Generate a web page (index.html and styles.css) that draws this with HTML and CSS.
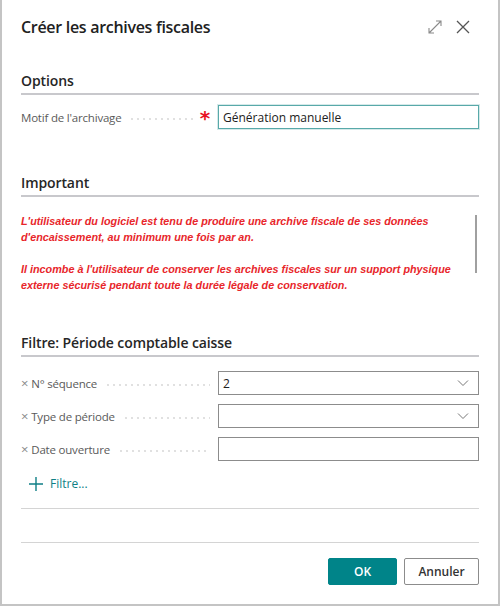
FILE: index.html
```html
<!DOCTYPE html>
<html lang="fr">
<head>
    <meta charset="UTF-8">
    <meta name="viewport" content="width=device-width, initial-scale=1.0">
    <title>Créer les archives fiscales</title>
    <link rel="stylesheet" href="styles.css">
</head>
<body>
    <div class="dialog">
        <div class="dialog-header">
            <h1 class="dialog-title">Créer les archives fiscales</h1>
            <div class="header-actions">
                <svg class="icon-expand" width="16" height="16" viewBox="0 0 16 16" fill="none" stroke="#8a8a8a" stroke-width="1.1">
                    <path d="M2 14L14 2M9 2h5v5M2 9v5h5"></path>
                </svg>
                <svg class="icon-close" width="16" height="16" viewBox="0 0 16 16" fill="none" stroke="#555" stroke-width="1.3">
                    <path d="M2 2L14 14M14 2L2 14"></path>
                </svg>
            </div>
        </div>

        <div class="dialog-body">
            <section class="group">
                <h2 class="group-title">Options</h2>
                <div class="field">
                    <div class="field-label">
                        <span class="label-text">Motif de l'archivage</span>
                        <span class="leader"></span>
                        <span class="required">*</span>
                    </div>
                    <div class="field-input focused">Génération manuelle</div>
                </div>
            </section>

            <section class="group group-important">
                <h2 class="group-title">Important</h2>
                <div class="notice">
                    <div class="notice-text">
                        <p>L'utilisateur du logiciel est tenu de produire une archive fiscale de ses données d'encaissement, au minimum une fois par an.</p>
                        <p>Il incombe à l'utilisateur de conserver les archives fiscales sur un support physique externe sécurisé pendant toute la durée légale de conservation.</p>
                    </div>
                    <div class="scrollbar"></div>
                </div>
            </section>

            <section class="group group-filter">
                <h2 class="group-title">Filtre: Période comptable caisse</h2>
                <div class="filter-list">
                    <div class="field filter-field">
                        <div class="field-label">
                            <span class="remove">×</span>
                            <span class="label-text">N° séquence</span>
                            <span class="leader"></span>
                        </div>
                        <div class="field-input">
                            <span>2</span>
                            <svg class="chevron" width="12" height="8" viewBox="0 0 12 8" fill="none" stroke="#777" stroke-width="1">
                                <path d="M1 1.5l5 5 5-5"></path>
                            </svg>
                        </div>
                    </div>
                    <div class="field filter-field">
                        <div class="field-label">
                            <span class="remove">×</span>
                            <span class="label-text">Type de période</span>
                            <span class="leader"></span>
                        </div>
                        <div class="field-input">
                            <span></span>
                            <svg class="chevron" width="12" height="8" viewBox="0 0 12 8" fill="none" stroke="#777" stroke-width="1">
                                <path d="M1 1.5l5 5 5-5"></path>
                            </svg>
                        </div>
                    </div>
                    <div class="field filter-field">
                        <div class="field-label">
                            <span class="remove">×</span>
                            <span class="label-text">Date ouverture</span>
                            <span class="leader"></span>
                        </div>
                        <div class="field-input"></div>
                    </div>
                </div>
                <div class="add-filter">
                    <svg width="14" height="14" viewBox="0 0 14 14" fill="none" stroke="#0f7f86" stroke-width="1.4">
                        <path d="M7 0v14M0 7h14"></path>
                    </svg>
                    <span>Filtre...</span>
                </div>
            </section>

            <div class="separator"></div>
        </div>

        <div class="dialog-footer">
            <button class="btn btn-primary">OK</button>
            <button class="btn btn-secondary">Annuler</button>
        </div>
    </div>
</body>
</html>
```

FILE: styles.css
```css
* {
    box-sizing: border-box;
    margin: 0;
    padding: 0;
}

body {
    font-family: 'Open Sans', 'Noto Sans', sans-serif;
    background: #ffffff;
    color: #212121;
    width: 500px;
    height: 606px;
    overflow: hidden;
}

.dialog {
    height: 606px;
    border-left: 2px solid #c4c4c4;
    border-right: 2px solid #c4c4c4;
    border-bottom: 2px solid #c4c4c4;
    display: flex;
    flex-direction: column;
}

.dialog-header {
    display: flex;
    align-items: center;
    justify-content: space-between;
    padding: 12px 27px 0 19px;
    height: 42px;
}

.dialog-title {
    font-size: 16px;
    font-weight: 600;
    letter-spacing: -0.3px;
    color: #212121;
}

.header-actions {
    display: flex;
    align-items: center;
    gap: 12px;
}

.dialog-body {
    padding: 0 19px;
    flex: 1;
}

.group-title {
    font-size: 14px;
    font-weight: 600;
    color: #262626;
    padding-bottom: 3px;
    border-bottom: 2px solid #c8c8cc;
    letter-spacing: -0.1px;
}

.group {
    padding-top: 29px;
}

.group-important {
    padding-top: 44px;
}

.group-filter {
    padding-top: 40px;
}

.field {
    display: flex;
    align-items: center;
    margin-top: 10px;
}

.filter-list {
    display: flex;
    flex-direction: column;
    gap: 9px;
    margin-top: 14px;
}

.filter-list .field {
    margin-top: 0;
}

.field-label {
    width: 197px;
    display: flex;
    align-items: center;
    font-size: 11.5px;
    color: #5a5a5a;
    padding-right: 8px;
    letter-spacing: -0.2px;
}

.label-text {
    white-space: nowrap;
}

.leader {
    flex: 1;
    margin: 3px 0 0 8px;
    background-image: radial-gradient(circle, #bcbcbc 0.6px, transparent 0.8px);
    background-size: 6px 2px;
    background-repeat: repeat-x;
    height: 2px;
}

.required {
    color: #e81123;
    font-family: 'DejaVu Sans', sans-serif;
    font-size: 20px;
    font-weight: 700;
    line-height: 14px;
    height: 14px;
    margin: 0 0 0 6px;
    position: relative;
    top: 1px;
}

.remove {
    color: #8a8a8a;
    font-size: 13px;
    margin-right: 3px;
}

.field-input {
    flex: 1;
    height: 24px;
    border: 1px solid #8c8c8c;
    display: flex;
    align-items: center;
    justify-content: space-between;
    padding: 0 9px 0 4px;
    font-size: 12px;
    color: #212121;
}

.field-input.focused {
    border: 1px solid #58a9a9;
    box-shadow: 0 0 0 1px rgba(88, 169, 169, 0.25);
}

.notice {
    display: flex;
    justify-content: space-between;
    margin-top: 16px;
}

.notice-text {
    font-family: 'Liberation Sans', sans-serif;
    font-size: 10.8px;
    font-weight: 700;
    font-style: italic;
    color: #e8262b;
    line-height: 16px;
}

.notice-text p + p {
    margin-top: 16px;
}

.scrollbar {
    width: 2px;
    height: 58px;
    background: #a0a0a0;
    margin: 2px 2px 0 0;
    flex-shrink: 0;
}

.add-filter {
    display: flex;
    align-items: center;
    gap: 7px;
    margin: 14px 0 0 8px;
    font-size: 12px;
    color: #0f7f86;
}

.separator {
    height: 1px;
    background: #d4d4d4;
    margin-top: 16px;
}

.dialog-footer {
    border-top: 1px solid #d4d4d4;
    margin: 0 19px;
    padding: 15px 0 19px;
    display: flex;
    justify-content: flex-end;
    gap: 7px;
}

.btn {
    font-family: 'Open Sans', 'Noto Sans', sans-serif;
    font-size: 12px;
    font-weight: 600;
    height: 27px;
    cursor: pointer;
}

.btn-primary {
    width: 69px;
    background: #008489;
    color: #ffffff;
    border: 1px solid #008489;
    border-radius: 2px;
}

.btn-secondary {
    width: 75px;
    background: #ffffff;
    color: #333333;
    border: 1px solid #8c8c8c;
    border-radius: 2px;
}
```
